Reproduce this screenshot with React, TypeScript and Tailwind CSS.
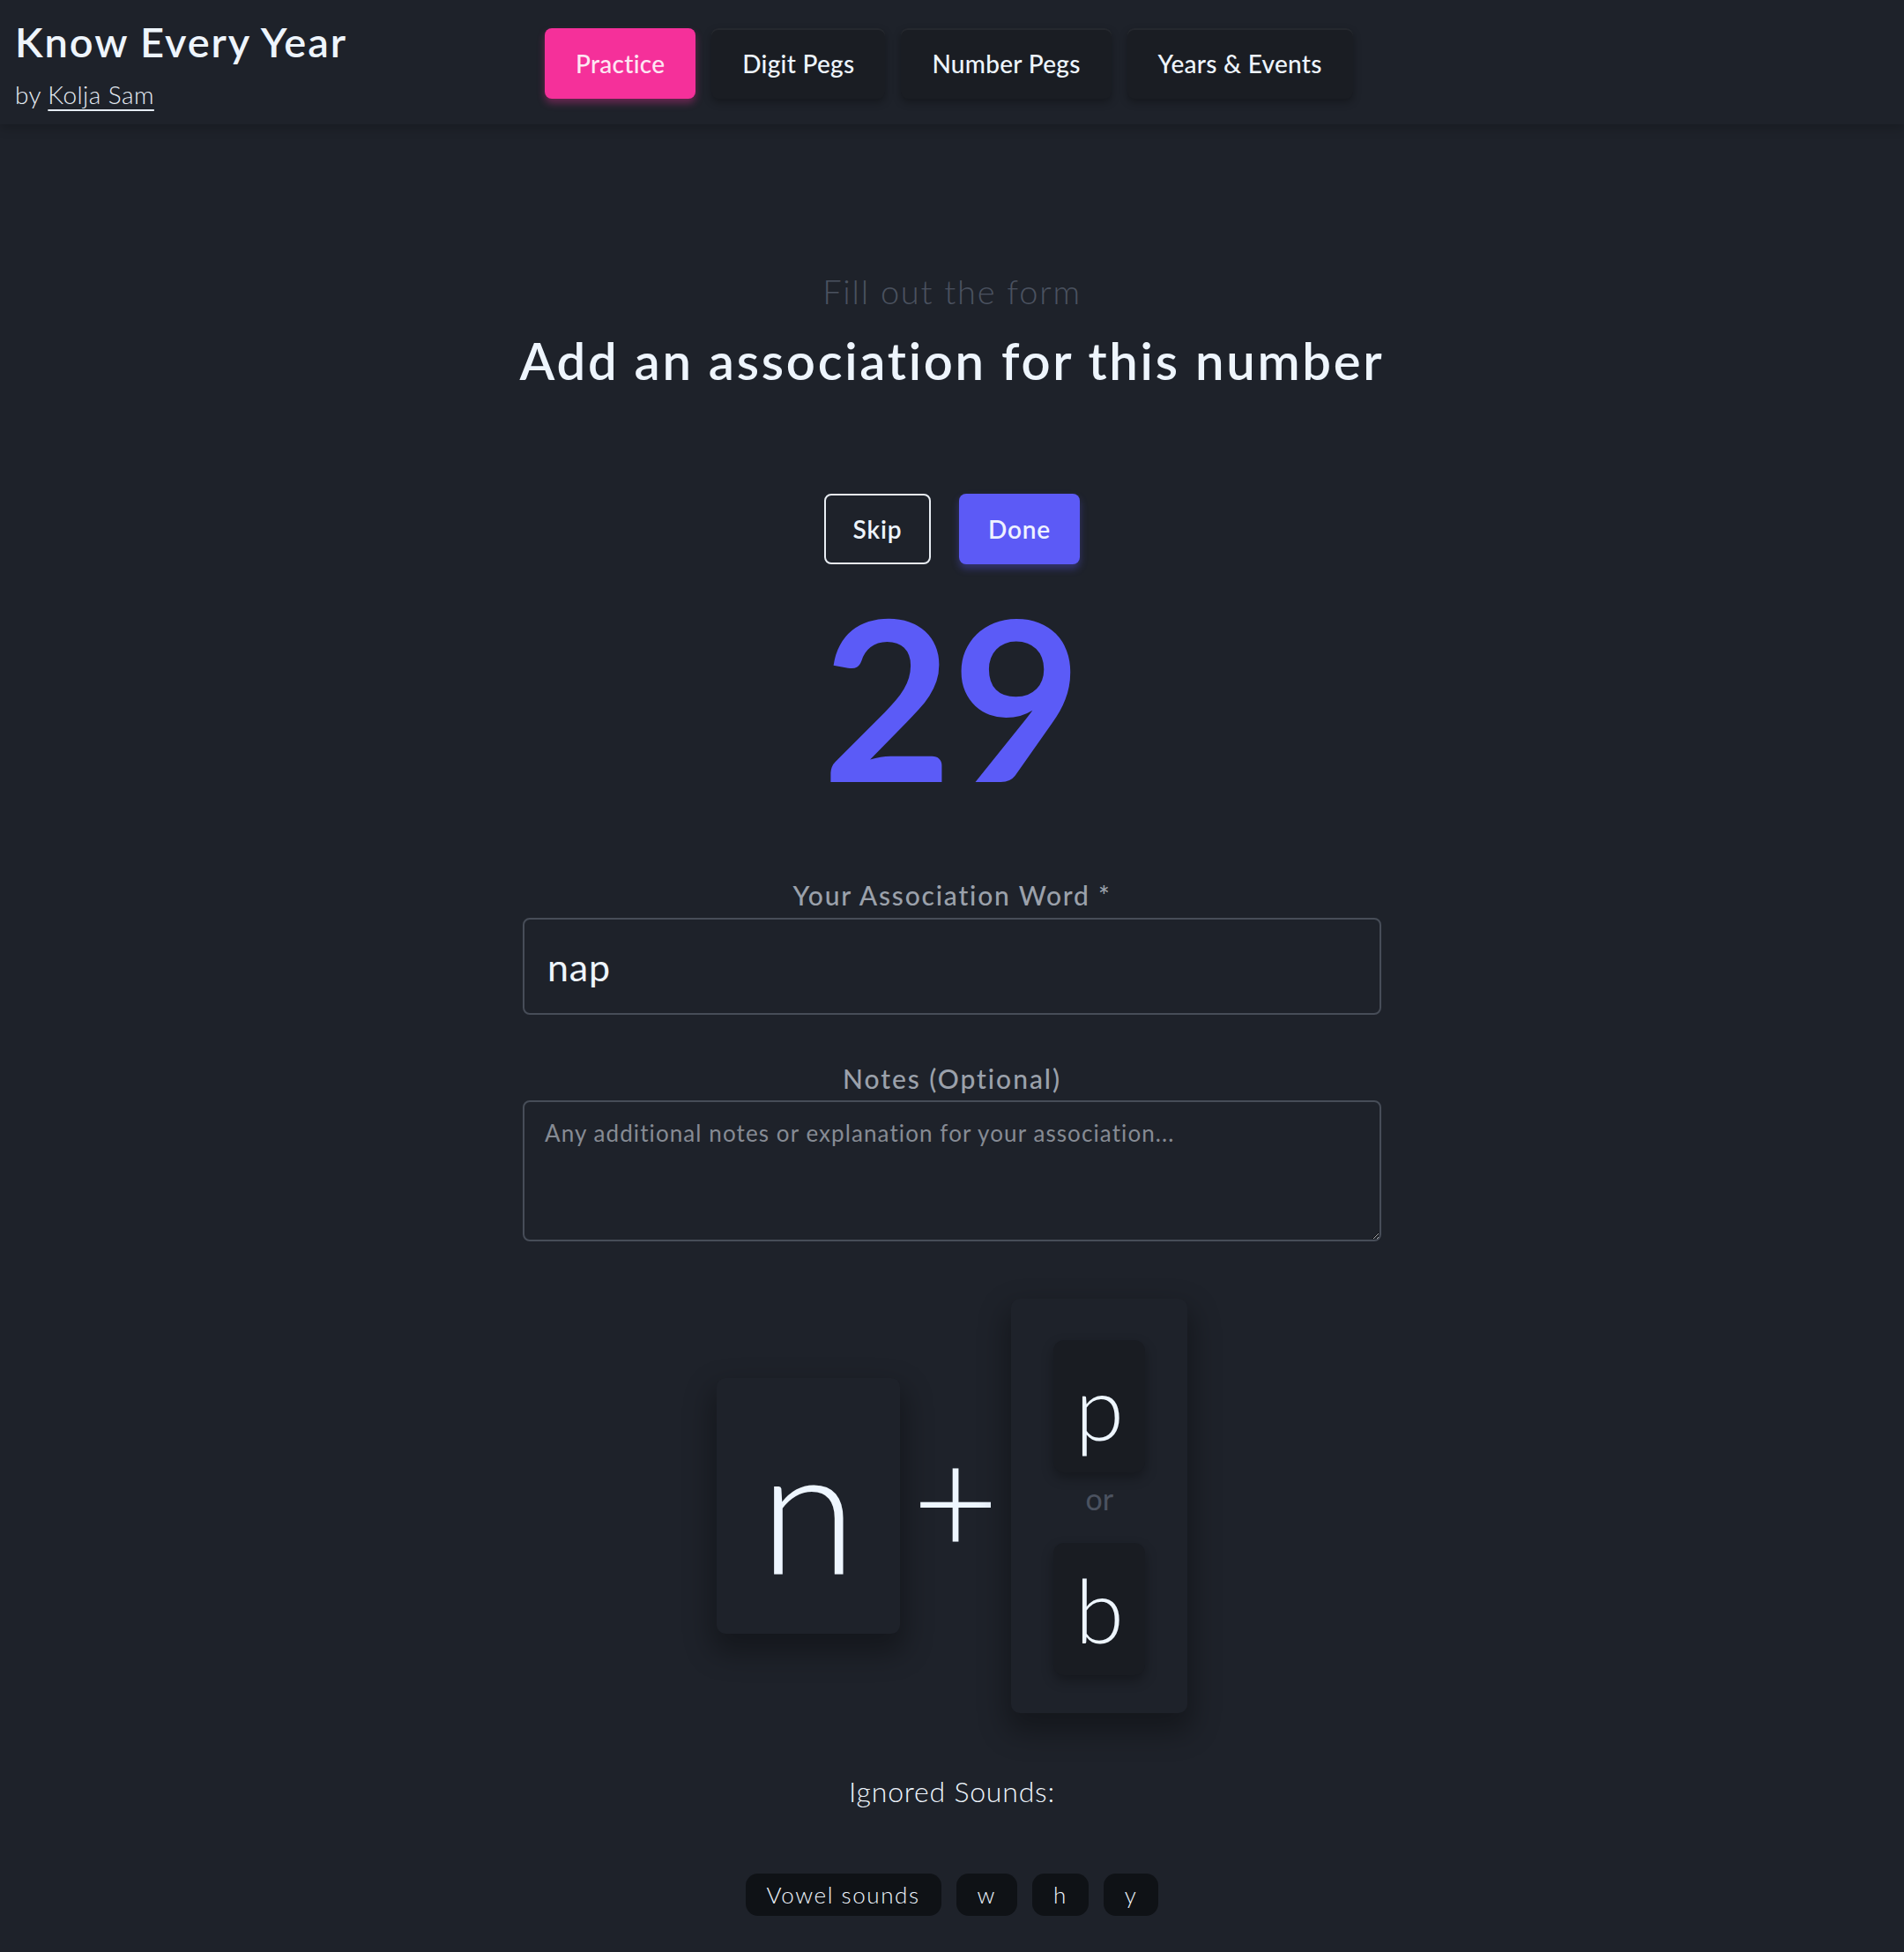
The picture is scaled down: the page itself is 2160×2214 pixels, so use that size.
import { useState } from 'react'

const navLinks = [
  { text: 'Practice', active: true },
  { text: 'Digit Pegs', active: false },
  { text: 'Number Pegs', active: false },
  { text: 'Years & Events', active: false },
]

const ignoredSounds = ['Vowel sounds', 'w', 'h', 'y']

function Header() {
  return (
    <header className="h-[141px] flex items-start px-[17px] bg-[#1e222a] shadow-[0_4px_12px_rgba(0,0,0,0.22)] relative z-10">
      <div className="w-[601px] pt-[24px]">
        <h1 className="text-[47px] leading-none font-semibold tracking-[0.04em] text-[#eef5fd]">Know Every Year</h1>
        <p className="mt-[22px] text-[28px] leading-none font-light tracking-[0.015em] text-[#e6edf5]">
          by{' '}
          <a href="#" className="underline decoration-2 underline-offset-[6px]">
            Kolja Sam
          </a>
        </p>
      </div>
      <nav className="flex gap-[18px] mt-[32px]">
        {navLinks.map((link) => (
          <button
            key={link.text}
            className={
              link.active
                ? 'h-[80px] px-[35px] rounded-[8px] text-[28px] font-medium tracking-[0.01em] text-[#fde7f3] bg-[#f5309a] shadow-[0_5px_8px_rgba(245,48,154,0.35)]'
                : 'h-[80px] px-[35px] rounded-[8px] text-[28px] font-medium tracking-[0.01em] text-[#eef5fd] bg-[#1a1d23] shadow-[inset_0_2px_0_rgba(255,255,255,0.05),0_4px_10px_rgba(0,0,0,0.3)]'
            }
          >
            {link.text}
          </button>
        ))}
      </nav>
    </header>
  )
}

function LetterTile({ letter }: { letter: string }) {
  return (
    <div className="w-[104px] h-[150px] rounded-[12px] bg-[#191c22] shadow-[0_6px_14px_rgba(0,0,0,0.3)] flex items-center justify-center">
      <span className="text-[100px] leading-none font-light text-[#eef6ff]">{letter}</span>
    </div>
  )
}

function SoundCards() {
  return (
    <div className="mt-[65px] flex items-center justify-center gap-[14px]">
      <div className="w-[208px] h-[290px] rounded-[10px] bg-[#1e222a] shadow-[0_16px_32px_6px_rgba(0,0,0,0.32)] flex items-center justify-center">
        <span className="text-[200px] leading-none font-light text-[#eef6ff]">n</span>
      </div>
      <span className="text-[170px] leading-none font-light text-[#eef6ff] pb-[20px]">+</span>
      <div className="w-[200px] h-[470px] rounded-[10px] bg-[#1e222a] shadow-[0_16px_32px_6px_rgba(0,0,0,0.32)] flex flex-col items-center pt-[47px] pb-[43px]">
        <LetterTile letter="p" />
        <div className="h-[80px] pb-[20px] flex items-center justify-center text-[34px] leading-none text-[#4b5260]">or</div>
        <LetterTile letter="b" />
      </div>
    </div>
  )
}

export default function App() {
  const [word, setWord] = useState('nap')

  return (
    <div className="min-h-screen bg-[#1e222a] font-['Lato',sans-serif]">
      <Header />
      <main className="flex flex-col items-center pt-[170px] pb-[40px]">
        <p className="text-[38px] leading-none font-light tracking-[0.046em] text-[#4b5260]">Fill out the form</p>
        <h2 className="mt-[31px] text-[58px] leading-none font-semibold tracking-[0.047em] text-[#eef5fd]">
          Add an association for this number
        </h2>

        <div className="mt-[122px] flex gap-[32px]">
          <button className="w-[121px] h-[80px] rounded-[8px] border-2 border-[#e8edf3] text-[28px] font-semibold tracking-[0.03em] text-[#eef5fd]">
            Skip
          </button>
          <button className="w-[137px] h-[80px] rounded-[8px] bg-[#5c5af6] text-[28px] font-semibold tracking-[0.03em] text-[#eef2ff] shadow-[0_5px_8px_rgba(92,90,246,0.35)]">
            Done
          </button>
        </div>

        <div className="mt-[22px] text-[254px] leading-none font-bold text-[#5b5bf7]">29</div>

        <label className="mt-[84px] mb-[11px] text-[30px] leading-none font-medium tracking-[0.06em] text-[#9ba1ab]">
          Your Association Word *
        </label>
        <input
          value={word}
          onChange={(e) => setWord(e.target.value)}
          className="w-[974px] h-[110px] rounded-[8px] border-2 border-[#474d58] bg-[#1e222a] px-[26px] text-[43px] tracking-[0.02em] text-[#eef5fd] outline-none"
        />

        <label className="mt-[57px] mb-[10px] text-[30px] leading-none font-medium tracking-[0.065em] text-[#9ba1ab]">
          Notes (Optional)
        </label>
        <textarea
          placeholder="Any additional notes or explanation for your association..."
          className="w-[974px] h-[160px] rounded-[8px] border-2 border-[#474d58] bg-[#1e222a] px-[23px] pt-[16px] text-[26px] leading-[1.5] tracking-[0.042em] text-[#eef5fd] placeholder:text-[#868b94] outline-none"
        />

        <SoundCards />

        <p className="mt-[73px] text-[32px] leading-none font-light tracking-[0.025em] text-[#eef5fd]">Ignored Sounds:</p>
        <div className="mt-[77px] flex gap-[17px]">
          {ignoredSounds.map((sound) => (
            <span
              key={sound}
              className="h-[48px] px-[24px] rounded-[14px] bg-[#0f1216] flex items-center text-[26px] font-light tracking-[0.06em] text-[#eef5fd]"
            >
              {sound}
            </span>
          ))}
        </div>
      </main>
    </div>
  )
}
